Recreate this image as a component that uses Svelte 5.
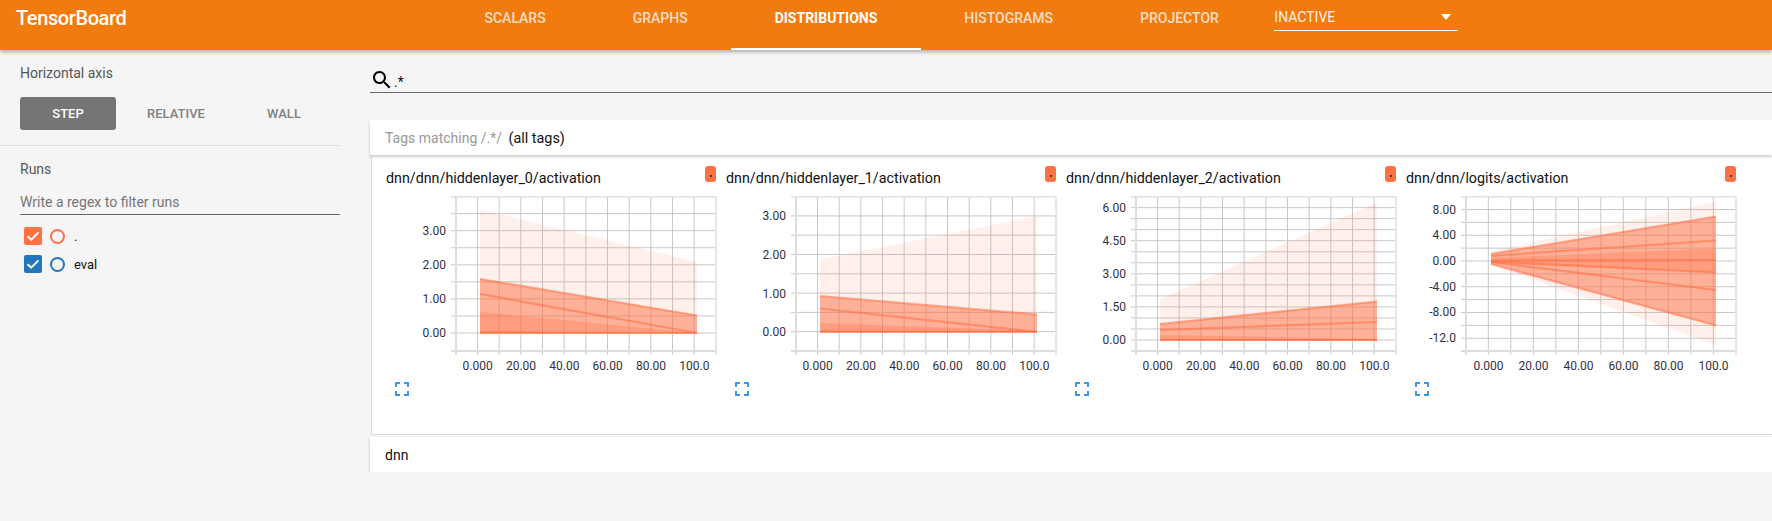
<script>
  const tabs = ['Scalars', 'Graphs', 'Distributions', 'Histograms', 'Projector'];
  const active = 'Distributions';

  // all chart coordinates are page pixels, the svg viewBox maps them
  const charts = [
    {
      name: 'dnn/dnn/hiddenlayer_0/activation',
      ox: 386, left: 456, right: 716, dataL: 480, dataR: 697, gridBase: 333, gridStep: 17.05,
      labels: [['3.00', 231], ['2.00', 265], ['1.00', 299], ['0.00', 333]],
      bands: [
        { top: [209.5, 262], bottom: [333, 333], op: 0.1 },
        { top: [279, 315.5], bottom: [333, 333], op: 0.5 },
        { top: [312, 333], bottom: [333, 333], op: 0.3 },
        { top: [331, 333], bottom: [333.5, 333.5], op: 0.5 }
      ],
      lines: [[279, 315.5], [294, 333], [333, 333]]
    },
    {
      name: 'dnn/dnn/hiddenlayer_1/activation',
      ox: 726, left: 796, right: 1056, dataL: 820, dataR: 1037, gridBase: 331.7, gridStep: 19.3,
      labels: [['3.00', 216], ['2.00', 254.5], ['1.00', 293.5], ['0.00', 331.5]],
      bands: [
        { top: [259.5, 216], bottom: [332, 332], op: 0.1 },
        { top: [296, 314.5], bottom: [332, 332], op: 0.5 },
        { top: [323, 331], bottom: [332, 332], op: 0.3 }
      ],
      lines: [[296, 314.5], [308.5, 332], [331.5, 331.5], [332, 332]]
    },
    {
      name: 'dnn/dnn/hiddenlayer_2/activation',
      ox: 1066, left: 1136, right: 1396, dataL: 1160, dataR: 1377, gridBase: 340, gridStep: 11.03,
      labels: [['6.00', 207.5], ['4.50', 240.5], ['3.00', 274], ['1.50', 307], ['0.00', 340]],
      bands: [
        { top: [299, 202.5], bottom: [340, 340], op: 0.1 },
        { top: [324, 301.5], bottom: [340, 340], op: 0.5 },
        { top: [335, 339], bottom: [340, 340], op: 0.3 }
      ],
      lines: [[324, 301.5], [330, 322], [340, 340], [340, 340]]
    },
    {
      name: 'dnn/dnn/logits/activation',
      ox: 1406, left: 1466, right: 1736, dataL: 1491, dataR: 1716, gridBase: 261, gridStep: 12.87,
      labels: [['8.00', 209.5], ['4.00', 235], ['0.00', 261], ['-4.00', 286.5], ['-8.00', 312], ['-12.0', 338]],
      bands: [
        { top: [251.5, 201.5], bottom: [265, 345], op: 0.1 },
        { top: [254, 216.5], bottom: [264, 325.5], op: 0.5 },
        { top: [258, 248.5], bottom: [263, 272.5], op: 0.3 }
      ],
      lines: [[254, 216.5], [256, 240.5], [260.5, 260], [261.5, 272.5], [262, 290], [264, 325.5]]
    }
  ];

  const top = 197;
  const bottom = 351;

  function vgrid(c) {
    const out = [];
    const step = (c.right - c.left) / 12;
    for (let i = 0; i <= 12; i++) out.push(c.left + step * i - (i > 0 && i < 12 ? 0.17 : 0));
    return out;
  }

  function hgrid(c) {
    const out = [];
    for (let y = c.gridBase; y >= top - 1; y -= c.gridStep) out.push(y);
    for (let y = c.gridBase + c.gridStep; y < bottom - 1; y += c.gridStep) out.push(y);
    return out;
  }

  function xlabels(c) {
    const step = (c.right - c.left) / 12;
    return ['0.000', '20.00', '40.00', '60.00', '80.00', '100.0'].map((t, i) => [t, c.left + step * (1 + i * 2)]);
  }

  function bandPoints(c, b) {
    return `${c.dataL},${b.top[0]} ${c.dataR},${b.top[1]} ${c.dataR},${b.bottom[1]} ${c.dataL},${b.bottom[0]}`;
  }
</script>

<header class="toolbar">
  <div class="logo">TensorBoard</div>
  <nav class="tabs">
    {#each tabs as tab}
      <div class="tab" class:selected={tab === active}>{tab.toUpperCase()}</div>
    {/each}
  </nav>
  <div class="inactive">
    <span>INACTIVE</span>
    <span class="caret"></span>
  </div>
</header>

<div class="page">
  <aside class="sidebar">
    <section class="axis">
      <div class="heading">Horizontal axis</div>
      <div class="axis-buttons">
        <button class="on">STEP</button>
        <button>RELATIVE</button>
        <button>WALL</button>
      </div>
    </section>
    <section class="runs">
      <div class="heading">Runs</div>
      <div class="regex">Write a regex to filter runs</div>
      <div class="run">
        <span class="check orange">
          <svg width="18" height="18" viewBox="0 0 18 18"><path d="M3.5 9.2 7.2 12.6 14.5 5.4" fill="none" stroke="#fff" stroke-width="2" /></svg>
        </span>
        <span class="dot orange-ring"></span>
        <span class="run-name">.</span>
      </div>
      <div class="run">
        <span class="check blue">
          <svg width="18" height="18" viewBox="0 0 18 18"><path d="M3.5 9.2 7.2 12.6 14.5 5.4" fill="none" stroke="#fff" stroke-width="2" /></svg>
        </span>
        <span class="dot blue-ring"></span>
        <span class="run-name">eval</span>
      </div>
    </section>
  </aside>

  <main class="content">
    <div class="search">
      <svg width="24" height="24" viewBox="0 0 24 24">
        <path d="M15.5 14h-.79l-.28-.27C15.41 12.59 16 11.11 16 9.5 16 5.91 13.09 3 9.5 3S3 5.91 3 9.5 5.91 16 9.5 16c1.61 0 3.09-.59 4.23-1.57l.27.28v.79l5 4.99L20.49 19l-4.99-5zm-6 0C7.01 14 5 11.99 5 9.5S7.01 5 9.5 5 14 7.01 14 9.5 11.99 14 9.5 14z" />
      </svg>
      <span>.*</span>
    </div>

    <div class="bar tags"><span class="muted">Tags matching /.*/</span> <span class="all">(all tags)</span></div>

    <div class="chart-card">
      {#each charts as c}
        <div class="chart">
          <div class="chart-head">
            <span>{c.name}</span>
            <span class="chip"><i></i></span>
          </div>
          <svg class="plot" width="340" height="186" viewBox="{c.ox} 190 340 186">
            {#each vgrid(c) as x}
              <line x1={x} x2={x} y1={top} y2={bottom + 4} class="grid" />
            {/each}
            {#each hgrid(c) as y}
              <line x1={c.left - 5} x2={c.right} y1={y} y2={y} class="grid" />
            {/each}
            <line x1={c.left - 5} x2={c.right} y1={top} y2={top} class="edge" />
            <line x1={c.left - 5} x2={c.right} y1={bottom} y2={bottom} class="axis-line" />
            <line x1={c.left} x2={c.left} y1={top} y2={bottom + 4} class="axis-line" />
            <line x1={c.right} x2={c.right} y1={top} y2={bottom + 4} class="edge" />

            {#each c.bands as b}
              <polygon points={bandPoints(c, b)} fill="#ff7043" fill-opacity={b.op} />
            {/each}
            {#each c.lines as l}
              <line x1={c.dataL} x2={c.dataR} y1={l[0]} y2={l[1]} class="series" />
            {/each}

            {#each c.labels as l}
              <text x={c.left - 10} y={l[1]} dy=".35em" text-anchor="end">{l[0]}</text>
            {/each}
            {#each xlabels(c) as l}
              <text x={l[1]} y="366" dy=".35em" text-anchor="middle">{l[0]}</text>
            {/each}
          </svg>
          <svg class="expand" width="14" height="14" viewBox="0 0 14 14">
            <path d="M1 5V1H5M9 1H13V5M13 9V13H9M5 13H1V9" fill="none" stroke="#3f96f3" stroke-width="2" />
          </svg>
        </div>
      {/each}
    </div>

    <div class="bar group">dnn</div>
  </main>
</div>

<style>
  :global(body) {
    margin: 0;
    background: #f5f5f5;
    font-family: Roboto, "Liberation Sans", sans-serif;
    overflow: hidden;
  }

  .toolbar {
    display: flex;
    height: 50px;
    background: #f27b0f;
    color: #fff;
    box-shadow: 0 2px 4px rgba(0, 0, 0, 0.3);
    position: relative;
  }

  .logo {
    width: 425px;
    padding-left: 16px;
    font-size: 20px;
    font-weight: 500;
    line-height: 36px;
    letter-spacing: -0.4px;
  }

  .tabs {
    display: flex;
  }

  .tab {
    height: 48px;
    padding: 0 43.5px;
    font-size: 14px;
    font-weight: 500;
    line-height: 36px;
    color: rgba(255, 255, 255, 0.75);
    border-bottom: 2px solid transparent;
  }

  .tab.selected {
    color: #fff;
    font-weight: 700;
    border-bottom-color: #fff;
  }

  .inactive {
    display: flex;
    justify-content: space-between;
    align-items: center;
    box-sizing: border-box;
    width: 184px;
    height: 31px;
    margin-left: 12px;
    padding: 3px 7px 0 0;
    font-size: 14px;
    color: rgba(255, 255, 255, 0.9);
    border-bottom: 1px solid #fff;
  }

  .caret {
    width: 0;
    height: 0;
    border: 5px solid transparent;
    border-top: 6px solid #fff;
    border-bottom: 0;
  }

  .page {
    display: flex;
  }

  .sidebar {
    flex: none;
    width: 340px;
    color: #555;
    font-size: 14px;
  }

  .axis {
    height: 96px;
    padding-left: 20px;
    border-bottom: 1px solid #ddd;
    box-sizing: border-box;
  }

  .heading {
    line-height: 16px;
    padding-top: 15px;
  }

  .axis-buttons {
    display: flex;
    gap: 12px;
    margin-top: 16px;
  }

  .axis-buttons button {
    width: 96px;
    height: 33px;
    padding: 0;
    border: none;
    border-radius: 3px;
    background: transparent;
    color: #808080;
    font-family: inherit;
    font-size: 13px;
    font-weight: 500;
  }

  .axis-buttons button.on {
    background: #757575;
    color: #fff;
  }

  .runs {
    padding-left: 20px;
  }

  .regex {
    width: 320px;
    margin-top: 13px;
    height: 25px;
    line-height: 24px;
    color: #757575;
    border-bottom: 1px solid #666;
    box-sizing: border-box;
  }

  .run {
    display: flex;
    align-items: center;
    height: 18px;
    margin: 12px 0 10px 4px;
    color: #111;
    font-size: 13px;
  }

  .run + .run {
    margin-top: 10px;
  }

  .check {
    width: 18px;
    height: 18px;
    border-radius: 2px;
  }

  .check svg {
    display: block;
  }

  .orange {
    background: #ff7043;
  }

  .blue {
    background: #2176bc;
  }

  .dot {
    box-sizing: border-box;
    width: 15px;
    height: 15px;
    margin-left: 8px;
    border-radius: 50%;
    border: 2px solid;
  }

  .orange-ring {
    border-color: #ff7043;
  }

  .blue-ring {
    border-color: #2176bc;
  }

  .run-name {
    margin-left: 9px;
  }

  .content {
    flex: 1;
    min-width: 0;
    margin-left: 30px;
  }

  .search {
    display: flex;
    align-items: flex-start;
    height: 43px;
    box-sizing: border-box;
    padding-top: 18px;
    margin-bottom: 27px;
    border-bottom: 1px solid #666;
    font-size: 14px;
    color: #111;
  }

  .search span {
    line-height: 28px;
  }

  .bar {
    background: #fff;
    box-shadow: 0 2px 3px rgba(0, 0, 0, 0.2);
    font-size: 14px;
    color: #111;
    height: 35px;
    line-height: 36px;
    padding-left: 15px;
    position: relative;
  }

  .muted {
    color: #999;
  }

  .all {
    margin-left: 3px;
    font-size: 14.4px;
  }

  .chart-card {
    display: flex;
    box-sizing: border-box;
    height: 280px;
    margin-left: 1px;
    padding: 11px 0 0 14px;
    background: #fff;
    border-left: 1px solid #ddd;
    border-bottom: 1px solid #ddd;
  }

  .chart {
    flex: none;
    width: 340px;
  }

  .chart-head {
    display: flex;
    justify-content: space-between;
    width: 330px;
    height: 16px;
    font-size: 14.27px;
    line-height: 25px;
    color: #111;
  }

  .chip {
    display: flex;
    align-items: center;
    justify-content: center;
    width: 11px;
    height: 16px;
    padding-top: 4px;
    box-sizing: border-box;
    border-radius: 3px;
    background: #ff7043;
  }

  .chip i {
    width: 2px;
    height: 2px;
    background: #222;
    border-radius: 50%;
  }

  .plot {
    display: block;
    margin-top: 8px;
  }

  .plot text {
    font-size: 12px;
    fill: #32313f;
  }

  .grid {
    stroke: #c8c8c8;
    stroke-width: 1;
  }

  .edge {
    stroke: #e8e8e8;
    stroke-width: 1.5;
  }

  .axis-line {
    stroke: #ddd;
    stroke-width: 2;
  }

  .series {
    stroke: #ff7043;
    stroke-width: 2.2;
    stroke-opacity: 0.55;
  }

  .expand {
    display: block;
    margin: 6px 0 0 9px;
  }

  .group {
    margin-top: 2px;
  }
</style>
